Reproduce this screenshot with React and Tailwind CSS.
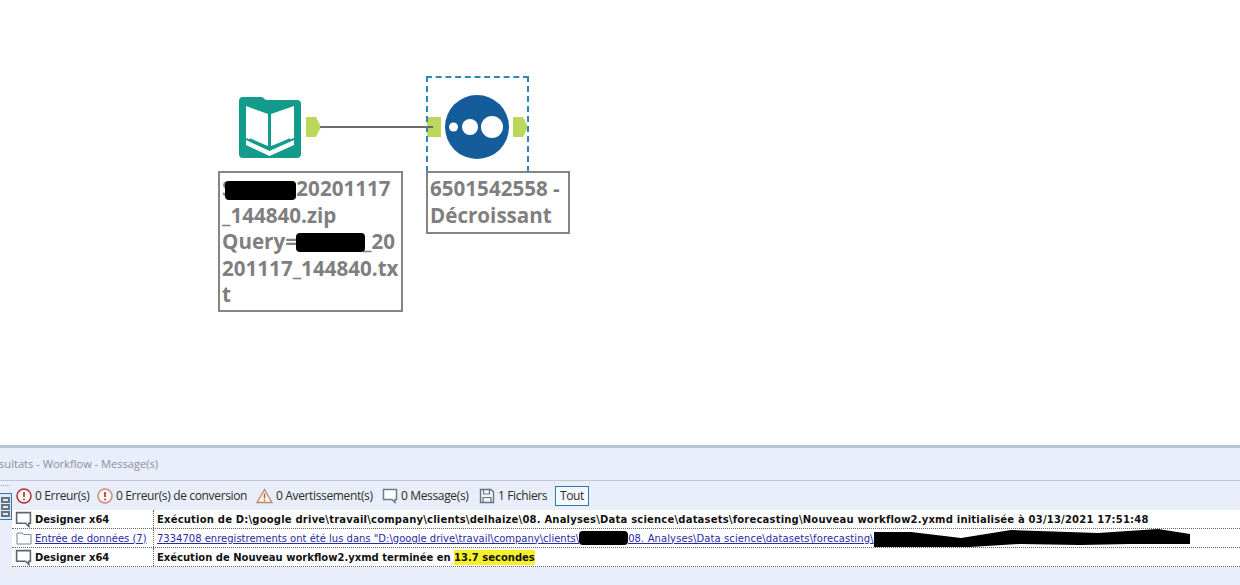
const LABEL_FONT = "font-['Open_Sans',sans-serif]";
const ROW_FONT = "font-['DejaVu_Sans',sans-serif]";

function BookIcon() {
  return (
    <svg width="64" height="63" viewBox="0 0 64 63" className="absolute left-[238px] top-[96px]">
      <path d="M5 1h19l4 3h31a4 4 0 0 1 4 4v50a4 4 0 0 1-4 4H5a4 4 0 0 1-4-4V5a4 4 0 0 1 4-4z" fill="#139b8b" />
      <path d="M8 10l22 8v32L8 42z" fill="#fff" />
      <path d="M33 18l23-8v32l-23 8z" fill="#fff" />
      <path d="M8 44l23.500 11L56 44v5L31.500 60 8 49z" fill="#fff" />
      <path d="M12 43l19.500 9L52 43" fill="none" stroke="#139b8b" strokeWidth="1.500" />
    </svg>
  );
}

function SortIcon() {
  return (
    <svg width="64" height="64" viewBox="0 0 64 64" className="absolute left-[445px] top-[95px]">
      <circle cx="32" cy="32" r="32" fill="#155c9b" />
      <circle cx="8.500" cy="32" r="4.500" fill="#fff" />
      <circle cx="25" cy="32" r="8" fill="#fff" />
      <circle cx="47" cy="32" r="11" fill="#fff" />
    </svg>
  );
}

function OutAnchor({ className }) {
  return (
    <svg width="15" height="20" viewBox="0 0 15 20" className={className}>
      <path d="M0 0h10l5 10-5 10H0z" fill="#bdd75a" />
    </svg>
  );
}

function Blob({ className }) {
  return <span className={`inline-block bg-black rounded-[4px] align-middle ${className}`} />;
}

// the long scribbled-out part of the second message
function Scribble() {
  return (
    <svg width="317" height="18" viewBox="0 0 317 18" className="shrink-0">
      <path d="M0 3h37l50 6 50-8 87 3 60-4 32 5v10h-60l-50 1-60-1-50 3-60 1-30 0-10-1-36-5z" fill="#000" />
    </svg>
  );
}

function Canvas() {
  return (
    <div className="relative h-[445px] bg-white">
      <BookIcon />
      <OutAnchor className="absolute left-[306px] top-[117px]" />
      <div className="absolute left-[427px] top-[117px] w-[14px] h-[20px] bg-[#bdd75a]" />
      <div className="absolute left-[320px] top-[126px] w-[113px] h-[2px] bg-[#6b6b6b]" />
      <SortIcon />
      <OutAnchor className="absolute left-[513px] top-[117px]" />
      <div className="absolute left-[426px] top-[76px] w-[103px] h-[96px] border-2 border-b-0 border-dashed border-[#2f86bd]" />

      <div className={`absolute left-[218px] top-[171px] w-[185px] h-[141px] border-2 border-[#858585] bg-white px-[2px] pt-[2px] text-[20.600px] leading-[26.500px] font-bold text-[#7f7f7f] whitespace-nowrap ${LABEL_FONT}`}>
        <div className="relative">
          S<Blob className="absolute left-[3px] top-[6px] w-[71px] h-[19px]" />
          <span className="ml-[63px]">20201117</span>
        </div>
        <div>_144840.zip</div>
        <div className="relative">
          Query=<Blob className="absolute left-[74px] top-[5px] w-[69px] h-[19px]" />
          <span className="ml-[66px]">_20</span>
        </div>
        <div>201117_144840.tx</div>
        <div>t</div>
      </div>

      <div className={`absolute left-[426px] top-[171px] w-[144px] h-[63px] border-2 border-[#858585] bg-white px-[2px] pt-[2px] text-[20.600px] leading-[26.500px] font-bold text-[#7f7f7f] whitespace-nowrap ${LABEL_FONT}`}>
        <div>6501542558 -</div>
        <div>Décroissant</div>
      </div>
    </div>
  );
}

function ErrorIcon({ color }) {
  return (
    <svg width="16" height="16" viewBox="0 0 16 16">
      <circle cx="8" cy="8" r="7" fill="#fdf3f1" stroke={color} strokeWidth="1.500" />
      <path d="M8 4v5" stroke="#a8483f" strokeWidth="1.800" />
      <circle cx="8" cy="11.500" r="1" fill="#a8483f" />
    </svg>
  );
}

function WarnIcon() {
  return (
    <svg width="17" height="16" viewBox="0 0 17 16">
      <path d="M8.500 1.500L16 14.500H1z" fill="#fdf6ec" stroke="#b58a6c" strokeWidth="1.300" />
      <path d="M8.500 5.500v5" stroke="#b0623a" strokeWidth="1.500" />
      <circle cx="8.500" cy="12.300" r=".9" fill="#b0623a" />
    </svg>
  );
}

function MessageIcon({ size = 16, color = "#5b6670" }) {
  return (
    <svg width={size} height={size} viewBox="0 0 16 16">
      <path d="M1.500 1.500h13v10h-1.500v3l-3-3h-8.500z" fill="#fff" stroke={color} strokeWidth="1.500" />
    </svg>
  );
}

function FolderIcon() {
  return (
    <svg width="16" height="14" viewBox="0 0 16 14">
      <path d="M1 2h5l1.500 1.500H15V13H1z" fill="#fbfcff" stroke="#7a8590" strokeWidth="1" />
    </svg>
  );
}

function FileIcon() {
  return (
    <svg width="16" height="16" viewBox="0 0 16 16">
      <path d="M1.500 1.500h10.500l2.500 2.500v10.500h-13z" fill="#f4f6fb" stroke="#66727e" strokeWidth="1.400" />
      <path d="M4.500 2v4h6V2M4 14.500V9.500h8v5" fill="none" stroke="#66727e" strokeWidth="1.200" />
    </svg>
  );
}

function Filter({ icon, label, className }) {
  return (
    <div className={`flex items-center gap-[3px] shrink-0 ${className}`}>
      {icon}
      <span>{label}</span>
    </div>
  );
}

function Toolbar() {
  return (
    <div className="h-[29px] flex items-center pl-[4px] text-[12px] text-[#2b2b2b] font-['Open_Sans',sans-serif] tracking-[-0.35px]">
      <Filter icon={<ErrorIcon color="#a8323e" />} label="0 Erreur(s)" className="w-[81px]" />
      <Filter icon={<ErrorIcon color="#c9897f" />} label="0 Erreur(s) de conversion" className="w-[159px]" />
      <Filter icon={<WarnIcon />} label="0 Avertissement(s)" className="w-[126px]" />
      <Filter icon={<MessageIcon color="#6b7d8e" />} label="0 Message(s)" className="w-[97px]" />
      <Filter icon={<FileIcon />} label="1 Fichiers" className="w-[76px]" />
      <div className="w-[34px] h-[20px] flex items-center justify-center border border-[#2b7bb0] bg-[#f4f8fd]">Tout</div>
    </div>
  );
}

function Row({ icon, source, children, link, wide }) {
  return (
    <div className={`h-[19px] flex items-center border-b border-dotted border-[#666] bg-white text-[10px] whitespace-nowrap ${ROW_FONT} ${link ? "text-[#2a2aa5] underline" : "font-bold text-[#111]"}`}>
      <div className="w-[23px] flex justify-center shrink-0">{icon}</div>
      <div className="w-[119px] shrink-0 h-full flex items-center border-r border-dotted border-[#666] overflow-hidden">{source}</div>
      <div className={`pl-[3px] flex items-center min-w-0 ${wide ? "tracking-[0.2px]" : ""}`}>{children}</div>
    </div>
  );
}

function SideTab() {
  return (
    <div className="w-[12px] shrink-0 relative">
      <div className="absolute left-[1px] top-[4px] w-[9px] h-[2px] border-t border-dotted border-[#9aa3ad]" />
      <div className="absolute -left-[2px] top-[12px] w-[14px] h-[27px] border border-[#2b7bb0] bg-[#dfe9f6] flex flex-col items-center justify-center gap-[1px] pl-[1px]">
        <span className="w-[9px] h-[6px] border-2 border-[#66727e]" />
        <span className="w-[9px] h-[6px] border-2 border-[#66727e]" />
        <span className="w-[9px] h-[6px] border-2 border-[#66727e]" />
      </div>
    </div>
  );
}

function Results() {
  return (
    <div className="h-[140px] bg-[#e9eefa] border-t-[3px] border-[#b4c5d8] overflow-hidden">
      <div className="h-[33px] flex items-center border-b border-[#c3c8d0] text-[11.100px] text-[#8a8f96] font-['Open_Sans',sans-serif] whitespace-nowrap">
        <span className="-ml-[14px]">Résultats - Workflow - Message(s)</span>
      </div>
      <div className="flex">
        <SideTab />
        <div className="flex-1 min-w-0">
          <Toolbar />
          <Row icon={<MessageIcon size={17} />} source="Designer x64" wide>
            Exécution de D:\google drive\travail\company\clients\delhaize\08. Analyses\Data science\datasets\forecasting\Nouveau workflow2.yxmd initialisée à 03/13/2021 17:51:48
          </Row>
          <Row icon={<FolderIcon />} source="Entrée de données (7)" link>
            <span>7334708 enregistrements ont été lus dans "D:\google drive\travail\company\clients\</span>
            <Blob className="w-[49px] h-[14px]" />
            <span className="tracking-[0.1px]">08. Analyses\Data science\datasets\forecasting\</span>
            <Scribble />
          </Row>
          <Row icon={<MessageIcon size={17} />} source="Designer x64">
            <span>Exécution de Nouveau workflow2.yxmd terminée en&nbsp;</span>
            <span className="bg-[#f6f02a]">13.7 secondes</span>
          </Row>
        </div>
      </div>
    </div>
  );
}

export default function App() {
  return (
    <div className="w-[1240px] h-[585px] overflow-hidden bg-white">
      <Canvas />
      <Results />
    </div>
  );
}
